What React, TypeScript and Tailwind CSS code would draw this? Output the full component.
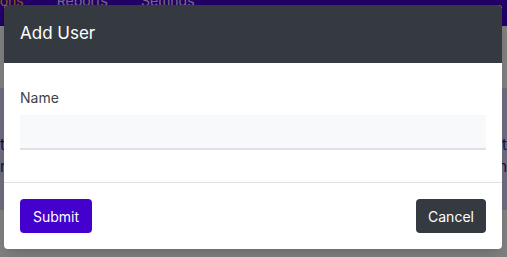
import { useState } from 'react'

export default function App() {
  const [name, setName] = useState('')

  return (
    <div className="relative h-[257px] w-[507px] overflow-hidden bg-white font-['Inter','Liberation_Sans',sans-serif]">
      {/* Page behind the dialog */}
      <nav className="flex h-[26px] items-start gap-[33px] bg-[#4400cc] text-[14px] leading-none">
        <span className="-ml-[26px] -mt-[6px] text-[#ffc107]">Actions</span>
        <span className="-mt-[6px] text-[#e4dcff]">Reports</span>
        <span className="-mt-[6px] text-[#e4dcff]">Settings</span>
      </nav>
      <div className="mt-[62px] flex h-[122px] flex-col bg-[#dcd6ff] pt-[46px] text-[15px] leading-[22px] text-[#2a1f66]">
        <div className="flex justify-between"><span>t</span><span>t</span></div>
        <div className="flex justify-between"><span>n</span><span>n</span></div>
      </div>

      {/* Backdrop */}
      <div className="absolute inset-0 bg-black/50" />

      {/* Modal */}
      <div className="absolute left-[4px] top-[5px] flex w-[498px] flex-col overflow-hidden rounded-[4px] bg-white shadow-lg">
        <div className="flex h-[58px] items-center bg-[#343a40] px-4">
          <h2 className="text-[17px] font-normal text-white">Add User</h2>
        </div>

        <div className="px-4 pb-[32px] pt-[24px]">
          <label className="mb-[7px] block text-[14px] leading-[21px] text-[#3d4349]">Name</label>
          <input
            value={name}
            onChange={(e) => setName(e.target.value)}
            className="block h-[35px] w-full border-b-2 border-[#dee2e6] bg-[#f8f9fa] px-3 text-[14px] outline-none"
          />
        </div>

        <div className="flex items-center justify-between border-t border-[#dee2e6] p-4">
          <button className="h-[34px] w-[72px] rounded-[4px] bg-[#4400cc] text-[14px] text-white">
            Submit
          </button>
          <button className="h-[34px] w-[70px] rounded-[4px] bg-[#343a40] text-[14px] text-white">
            Cancel
          </button>
        </div>
      </div>
    </div>
  )
}
